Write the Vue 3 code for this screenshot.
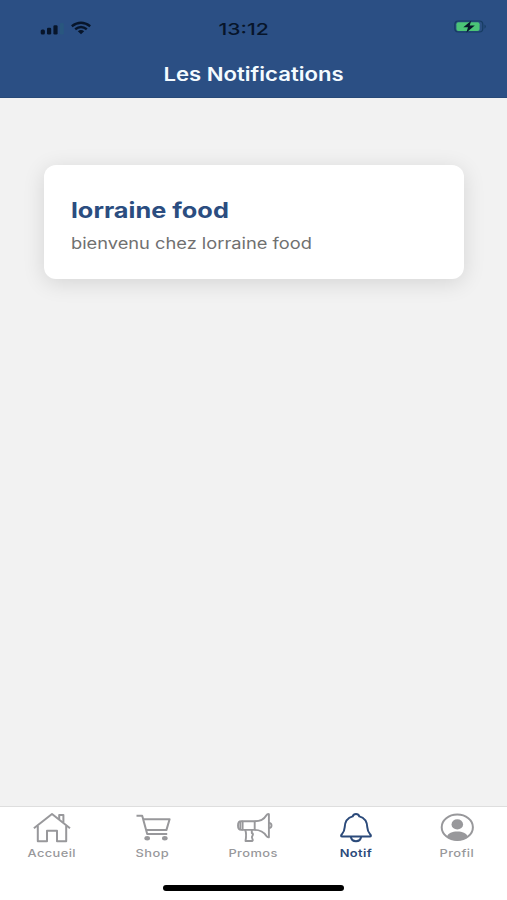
<script setup>
const tabs = [
  { id: 'home', label: 'Accueil' },
  { id: 'shop', label: 'Shop' },
  { id: 'promos', label: 'Promos' },
  { id: 'notif', label: 'Notif' },
  { id: 'profile', label: 'Profil' },
]
const active = 'notif'
</script>

<template>
  <div class="screen">
    <header class="header">
      <div class="status">
        <svg class="signals" width="52" height="16" viewBox="0 0 52 16">
          <rect x="0.7" y="9.6" width="4.2" height="5" rx="1.5" />
          <rect x="7" y="7.8" width="4.2" height="6.8" rx="1.3" />
          <rect x="13.4" y="5.2" width="4.2" height="9.4" rx="1.3" />
          <rect x="20" y="3" width="3.8" height="11.6" rx="1.3" class="dim" />
          <g class="wifi">
            <path d="M31.8 6.2 Q41 -0.8 50.2 6.2" />
            <path d="M35.2 9.3 Q41 4.7 46.8 9.3" />
          </g>
          <path d="M37.8 11.3 Q41 8.9 44.2 11.3 L41 14.3Z" />
        </svg>
        <div class="clock"><span>13:12</span></div>
        <svg class="battery" width="34" height="14" viewBox="0 0 34 14">
          <rect x="0.8" y="1" width="28" height="11" rx="3.5" fill="#2b4f82" stroke="#173c62" stroke-width="1.2" />
          <rect x="2.4" y="2.2" width="23.2" height="8.8" rx="2" fill="#4bc477" />
          <path d="M30.5 4.5 Q33.2 6.5 30.5 8.7Z" fill="#173c62" />
          <path d="M17.2 0.7 L9.3 7.2 H14 L12.4 12.4 L20.8 5.5 H15.7Z" fill="#07152a" />
        </svg>
      </div>
      <h1 class="title"><span>Les Notifications</span></h1>
    </header>

    <main class="content">
      <article class="card">
        <h2><span>lorraine food</span></h2>
        <p><span>bienvenu chez lorraine food</span></p>
      </article>
    </main>

    <nav class="tabs">
      <a v-for="t in tabs" :key="t.id" class="tab" :class="[t.id, { active: t.id === active }]">
        <svg class="icon" width="40" height="34" viewBox="0 0 40 34">
          <g v-if="t.id === 'home'">
            <path d="M1.9 18.2 L20 4 L38 18.2" />
            <path d="M5.8 16 V31.3 H15 V20.7 H25 V31.3 H34.2 V16" />
            <path d="M27.2 9 V5 H31.4 V12.4" />
          </g>
          <g v-else-if="t.id === 'shop'">
            <path d="M3.5 5.8 H9.2 L14.2 24.1 H34.2" />
            <path d="M10.4 9.2 H36.6 L33.4 20.1 H13.3" />
            <ellipse cx="14.2" cy="28.2" rx="2.8" ry="2.2" class="solid" />
            <ellipse cx="31.8" cy="28.2" rx="2.8" ry="2.2" class="solid" />
          </g>
          <g v-else-if="t.id === 'promos'" class="fine">
            <path d="M20.7 11.2 C26.7 11.2 30.7 8.2 32.4 5.2 Q33.2 3.9 34.9 4.1 V27.2 Q33.4 27.4 32.4 26 C30.2 22.5 26.7 19.9 20.7 19.9" />
            <rect x="8.6" y="11.2" width="12.1" height="8.7" />
            <path d="M8.6 11.2 H7.2 Q4 11.2 4 15.5 Q4 19.9 7.2 19.9 H8.6" />
            <path d="M6.3 12 V19" />
            <path d="M34.9 12.9 Q37.5 13 37.5 15.4 T34.9 17.9" />
            <path d="M11.2 19.9 C12.7 23.5 12.3 26.5 11.5 31 H18.2 Q19.2 30.7 18.5 29.2 Q17.2 27.1 18.7 25.2 Q19.5 23.7 17.8 23 V19.9" />
          </g>
          <g v-else-if="t.id === 'notif'">
            <path d="M21 4.1 C19.2 4.1 18.1 5.1 17.7 6.4 C12.1 7.9 9.9 12.2 9.7 17.3 C9.5 21.5 8.1 22.8 6.7 24.4 Q5.2 26.4 7.3 26.5 H34.7 Q36.8 26.4 35.3 24.4 C33.9 22.8 32.5 21.5 32.3 17.3 C32.1 12.2 29.9 7.9 24.3 6.4 C23.9 5.1 22.8 4.1 21 4.1Z" />
            <path d="M15.8 26.5 Q16.5 31.2 21 31.2 T26.2 26.5" />
          </g>
          <g v-else>
            <ellipse cx="21.3" cy="17.3" rx="15.6" ry="12.7" />
            <ellipse cx="21.3" cy="14.4" rx="5.8" ry="5.1" class="solid" />
            <path d="M10.9 26.5 C12.1 23 16.2 21.4 21.3 21.4 S30.5 23 31.7 26.5 Q27.2 30.6 21.3 30.6 T10.9 26.5Z" class="solid" />
          </g>
        </svg>
        <span class="label">{{ t.label }}</span>
      </a>
      <div class="indicator"></div>
    </nav>
  </div>
</template>

<style>
body {
  margin: 0;
}
</style>

<style scoped>
.screen {
  width: 507px;
  height: 900px;
  display: flex;
  flex-direction: column;
  background: #f2f2f2;
  font-family: Inter, "Liberation Sans", sans-serif;
  overflow: hidden;
}
span {
  display: inline-block;
  white-space: nowrap;
  transform: scaleX(1.178);
}
.header {
  height: 98px;
  box-sizing: border-box;
  background: #2b4f84;
  border-bottom: 1px solid #274978;
  flex: none;
}
.status {
  height: 57px;
  display: grid;
  grid-template-columns: 1fr 60px 1fr;
  align-items: center;
  box-sizing: border-box;
  padding-right: 19px;
}
.signals {
  fill: #07152a;
  margin: -1px 0 0 40px;
}
.dim {
  fill: #29577f;
}
.wifi {
  fill: none;
  stroke: #07152a;
  stroke-width: 2.4;
}
.clock {
  text-align: center;
  font-size: 16.5px;
  font-weight: 500;
  color: #07152a;
}
.clock span {
  transform: scaleX(1.28);
}
.battery {
  justify-self: end;
  margin-top: -4px;
}
.title {
  margin: 0;
  height: 36px;
  line-height: 36px;
  text-align: center;
  font-size: 18.8px;
  font-weight: 600;
  color: #f4fbff;
}
.content {
  flex: 1;
  padding: 67px 43px 0 44px;
}
.card {
  height: 114px;
  box-sizing: border-box;
  padding: 30px 27px 0;
  border-radius: 12px;
  background: #fff;
  box-shadow: 0 4px 22px rgba(0, 0, 0, 0.12);
}
.card span {
  transform-origin: left center;
}
h2 {
  margin: 0;
  line-height: 30px;
  font-size: 21.5px;
  font-weight: 700;
  color: #2b4d80;
}
p {
  margin: 8px 0 0;
  line-height: 22px;
  font-size: 15.5px;
  color: #707070;
}
.tabs {
  height: 94px;
  box-sizing: border-box;
  flex: none;
  border-top: 1px solid #dedede;
  background: #fff;
  display: grid;
  grid-template-columns: repeat(5, 1fr);
  grid-template-rows: 78px 6px;
  padding: 0 1px;
}
.tab {
  display: flex;
  flex-direction: column;
  align-items: center;
  padding-top: 3px;
  color: #98989b;
}
.tab.active {
  color: #2b4a7a;
}
.icon {
  fill: none;
  stroke: currentColor;
  stroke-width: 2;
  stroke-linejoin: round;
  flex: none;
}
.fine {
  stroke-width: 1.9;
}
.solid {
  fill: currentColor;
  stroke: none;
}
.label {
  margin-top: 1px;
  font-size: 11px;
  line-height: 16px;
  font-weight: 500;
  letter-spacing: 0.35px;
  transform: scaleX(1.17);
}
.notif .label,
.profile .label {
  margin-left: 2px;
}
.notif .label {
  font-weight: 600;
}
.indicator {
  grid-column: 1 / -1;
  justify-self: center;
  width: 181px;
  height: 6px;
  border-radius: 3px;
  background: #000;
}
</style>
